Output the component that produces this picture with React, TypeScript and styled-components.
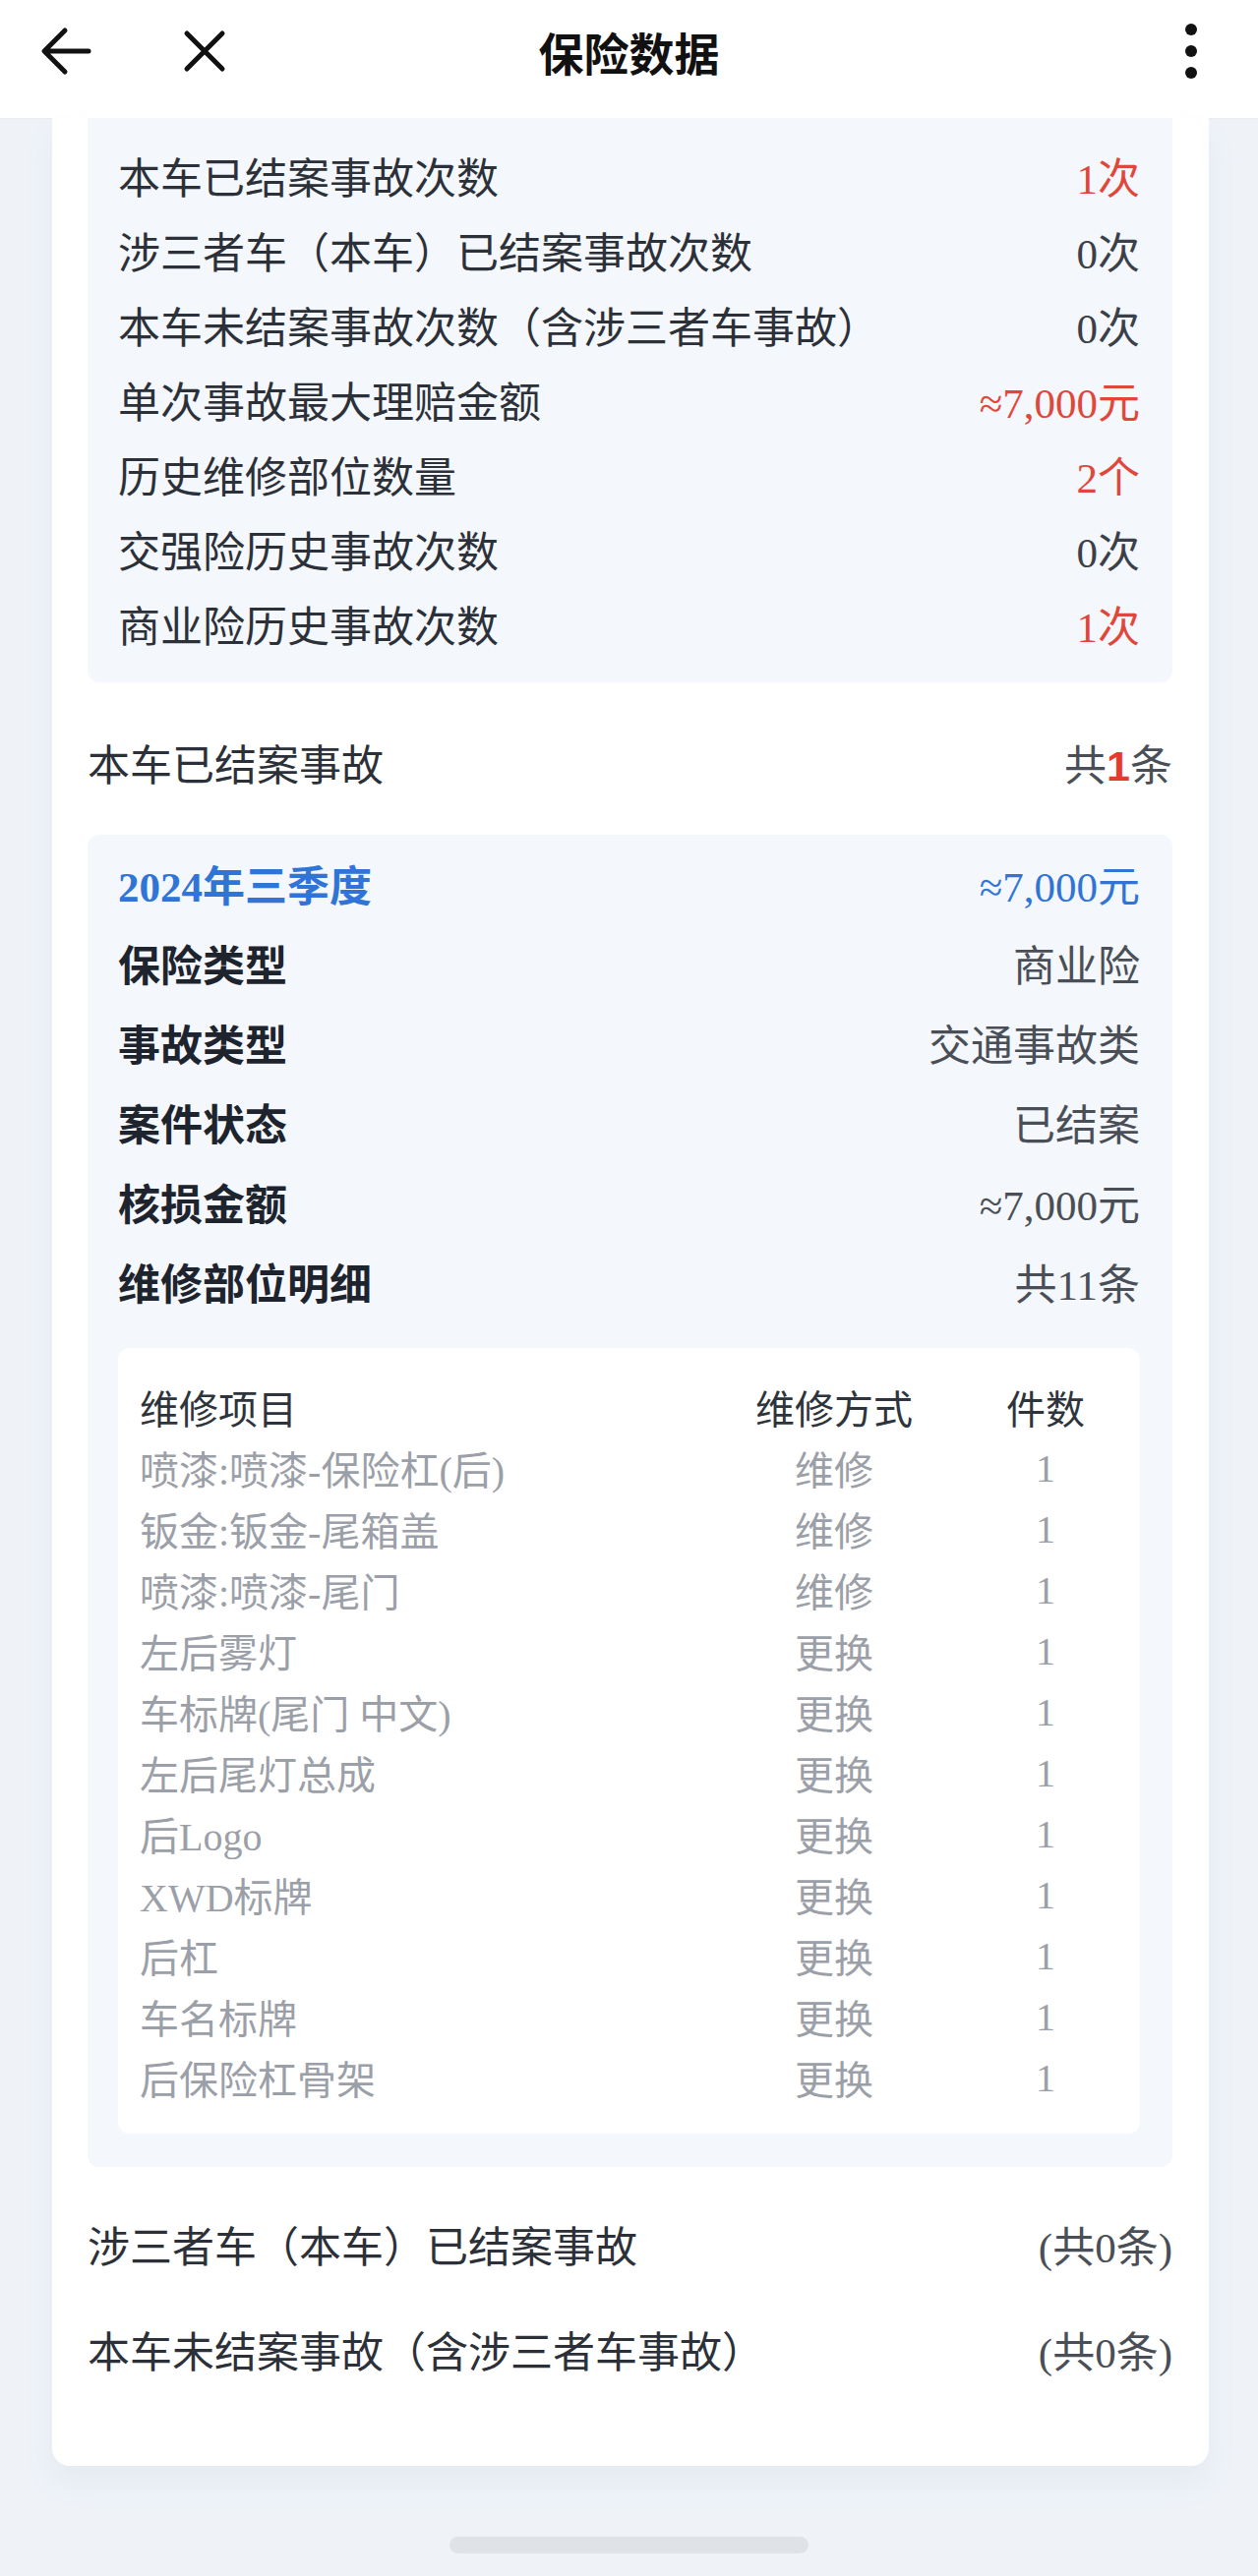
import React from "react";
import styled, { createGlobalStyle } from "styled-components";

const MIX = `"Liberation Serif", "Noto Sans CJK SC", serif`;
const SANS = `"Noto Sans CJK SC", "Noto Sans", sans-serif`;

const GlobalStyle = createGlobalStyle`
  html, body {
    margin: 0;
    padding: 0;
    background: #eff3f8;
  }
  #root {
    min-height: 2620px;
  }
`;

type Tone = "normal" | "red" | "blue" | "muted";

const toneColor: Record<Tone, string> = {
  normal: "#3b4048",
  red: "#e0473b",
  blue: "#2f74d6",
  muted: "#4a4f57",
};

const Page = styled.div`
  display: flex;
  flex-direction: column;
  min-height: 2620px;
  font-family: ${MIX};
`;

const Header = styled.header`
  display: grid;
  grid-template-columns: 1fr auto 1fr;
  align-items: center;
  height: 120px;
  padding: 0 40px 16px 40px;
  box-sizing: border-box;
  background: #fff;
  box-shadow: 0 1px 0 rgba(0, 0, 0, 0.025);

  .left {
    display: flex;
    align-items: center;
    gap: 84px;
  }

  .right {
    display: flex;
    justify-content: flex-end;
  }
`;

const IconButton = styled.span`
  display: flex;
  align-items: center;
  justify-content: center;
  width: 56px;
  height: 56px;
`;

const Title = styled.h1`
  margin: 0;
  font-family: ${SANS};
  font-size: 46px;
  font-weight: 700;
  color: #111;
  line-height: 56px;
`;

const Main = styled.main`
  padding: 0 50px 0 53px;
`;

const Card = styled.section`
  background: #fff;
  border-radius: 0 0 18px 18px;
  padding: 0 37px 90px 36px;
  box-shadow: 0 18px 30px rgba(120, 140, 170, 0.08);
`;

const StatsBox = styled.div`
  background: #f4f7fb;
  padding: 20px 33px 22px 31px;
  border-radius: 0 0 12px 12px;
`;

const Row = styled.div<{ $h: number }>`
  display: flex;
  justify-content: space-between;
  align-items: center;
  height: ${(p) => p.$h}px;
  font-size: 43px;
  white-space: nowrap;
`;

const Label = styled.span<{ $bold?: boolean; $tone?: Tone }>`
  color: ${(p) => (p.$tone ? toneColor[p.$tone] : p.$bold ? "#1d242e" : "#2c3139")};
  font-weight: ${(p) => (p.$bold ? 700 : 400)};
`;

const Value = styled.span<{ $tone: Tone; $bold?: boolean }>`
  color: ${(p) => toneColor[p.$tone]};
  font-weight: ${(p) => (p.$bold ? 700 : 400)};
`;

const SectionRow = styled(Row)<{ $top: number; $bottom: number }>`
  padding: ${(p) => p.$top}px 0 ${(p) => p.$bottom}px;
`;

const RedCount = styled.b`
  font-family: "Liberation Sans", ${SANS};
  color: #e8392f;
  font-weight: 700;
`;

const AccidentBox = styled.div`
  background: #f4f7fb;
  border-radius: 12px;
  padding: 8px 33px 34px 31px;
`;

const RepairTable = styled.div`
  margin-top: 28px;
  background: #fff;
  border-radius: 12px;
  padding: 29px 26px 26px 22px;
`;

const TableRow = styled.div<{ $head?: boolean }>`
  display: grid;
  grid-template-columns: 1fr 290px 140px;
  align-items: center;
  height: 62px;
  font-size: 40px;
  white-space: nowrap;
  color: ${(p) => (p.$head ? "#2e343c" : "#9ba0a8")};

  span:nth-child(n + 2) {
    text-align: center;
  }
`;

const HomeBar = styled.div`
  align-self: center;
  width: 365px;
  height: 17px;
  margin-top: 72px;
  border-radius: 9px;
  background: #dfe2e6;
`;

const stats: { label: string; value: string; tone: Tone }[] = [
  { label: "本车已结案事故次数", value: "1次", tone: "red" },
  { label: "涉三者车（本车）已结案事故次数", value: "0次", tone: "normal" },
  { label: "本车未结案事故次数（含涉三者车事故）", value: "0次", tone: "normal" },
  { label: "单次事故最大理赔金额", value: "≈7,000元", tone: "red" },
  { label: "历史维修部位数量", value: "2个", tone: "red" },
  { label: "交强险历史事故次数", value: "0次", tone: "normal" },
  { label: "商业险历史事故次数", value: "1次", tone: "red" },
];

const details = [
  { label: "保险类型", value: "商业险" },
  { label: "事故类型", value: "交通事故类" },
  { label: "案件状态", value: "已结案" },
  { label: "核损金额", value: "≈7,000元" },
  { label: "维修部位明细", value: "共11条" },
];

const repairs: [string, string][] = [
  ["喷漆:喷漆-保险杠(后)", "维修"],
  ["钣金:钣金-尾箱盖", "维修"],
  ["喷漆:喷漆-尾门", "维修"],
  ["左后雾灯", "更换"],
  ["车标牌(尾门 中文)", "更换"],
  ["左后尾灯总成", "更换"],
  ["后Logo", "更换"],
  ["XWD标牌", "更换"],
  ["后杠", "更换"],
  ["车名标牌", "更换"],
  ["后保险杠骨架", "更换"],
];

const BackIcon = () => (
  <svg width="56" height="56" viewBox="0 0 56 56" fill="none" stroke="#111" strokeWidth="5" strokeLinecap="round" strokeLinejoin="round">
    <path d="M50 28H6M26 7L5 28l21 21" />
  </svg>
);

const CloseIcon = () => (
  <svg width="56" height="56" viewBox="0 0 56 56" fill="none" stroke="#111" strokeWidth="5" strokeLinecap="round">
    <path d="M10 10l36 36M46 10L10 46" />
  </svg>
);

const MoreIcon = () => (
  <svg width="20" height="60" viewBox="0 0 20 60" fill="#111">
    <circle cx="10" cy="8" r="6" />
    <circle cx="10" cy="30" r="6" />
    <circle cx="10" cy="52" r="6" />
  </svg>
);

export default function App() {
  return (
    <>
      <GlobalStyle />
      <Page>
        <Header>
          <div className="left">
            <IconButton>
              <BackIcon />
            </IconButton>
            <IconButton>
              <CloseIcon />
            </IconButton>
          </div>
          <Title>保险数据</Title>
          <div className="right">
            <IconButton>
              <MoreIcon />
            </IconButton>
          </div>
        </Header>

        <Main>
          <Card>
            <StatsBox>
              {stats.map((s) => (
                <Row key={s.label} $h={76}>
                  <Label>{s.label}</Label>
                  <Value $tone={s.tone}>{s.value}</Value>
                </Row>
              ))}
            </StatsBox>

            <SectionRow $h={58} $top={52} $bottom={45}>
              <Label>本车已结案事故</Label>
              <Value $tone="muted">
                共<RedCount>1</RedCount>条
              </Value>
            </SectionRow>

            <AccidentBox>
              <Row $h={81}>
                <Label $bold $tone="blue">2024年三季度</Label>
                <Value $tone="blue">≈7,000元</Value>
              </Row>
              {details.map((d) => (
                <Row key={d.label} $h={81}>
                  <Label $bold>{d.label}</Label>
                  <Value $tone="muted">{d.value}</Value>
                </Row>
              ))}

              <RepairTable>
                <TableRow $head>
                  <span>维修项目</span>
                  <span>维修方式</span>
                  <span>件数</span>
                </TableRow>
                {repairs.map(([item, way]) => (
                  <TableRow key={item}>
                    <span>{item}</span>
                    <span>{way}</span>
                    <span>1</span>
                  </TableRow>
                ))}
              </RepairTable>
            </AccidentBox>

            <SectionRow $h={58} $top={49} $bottom={0}>
              <Label>涉三者车（本车）已结案事故</Label>
              <Value $tone="muted">(共0条)</Value>
            </SectionRow>
            <SectionRow $h={58} $top={49} $bottom={0}>
              <Label>本车未结案事故（含涉三者车事故）</Label>
              <Value $tone="muted">(共0条)</Value>
            </SectionRow>
          </Card>
        </Main>

        <HomeBar />
      </Page>
    </>
  );
}
